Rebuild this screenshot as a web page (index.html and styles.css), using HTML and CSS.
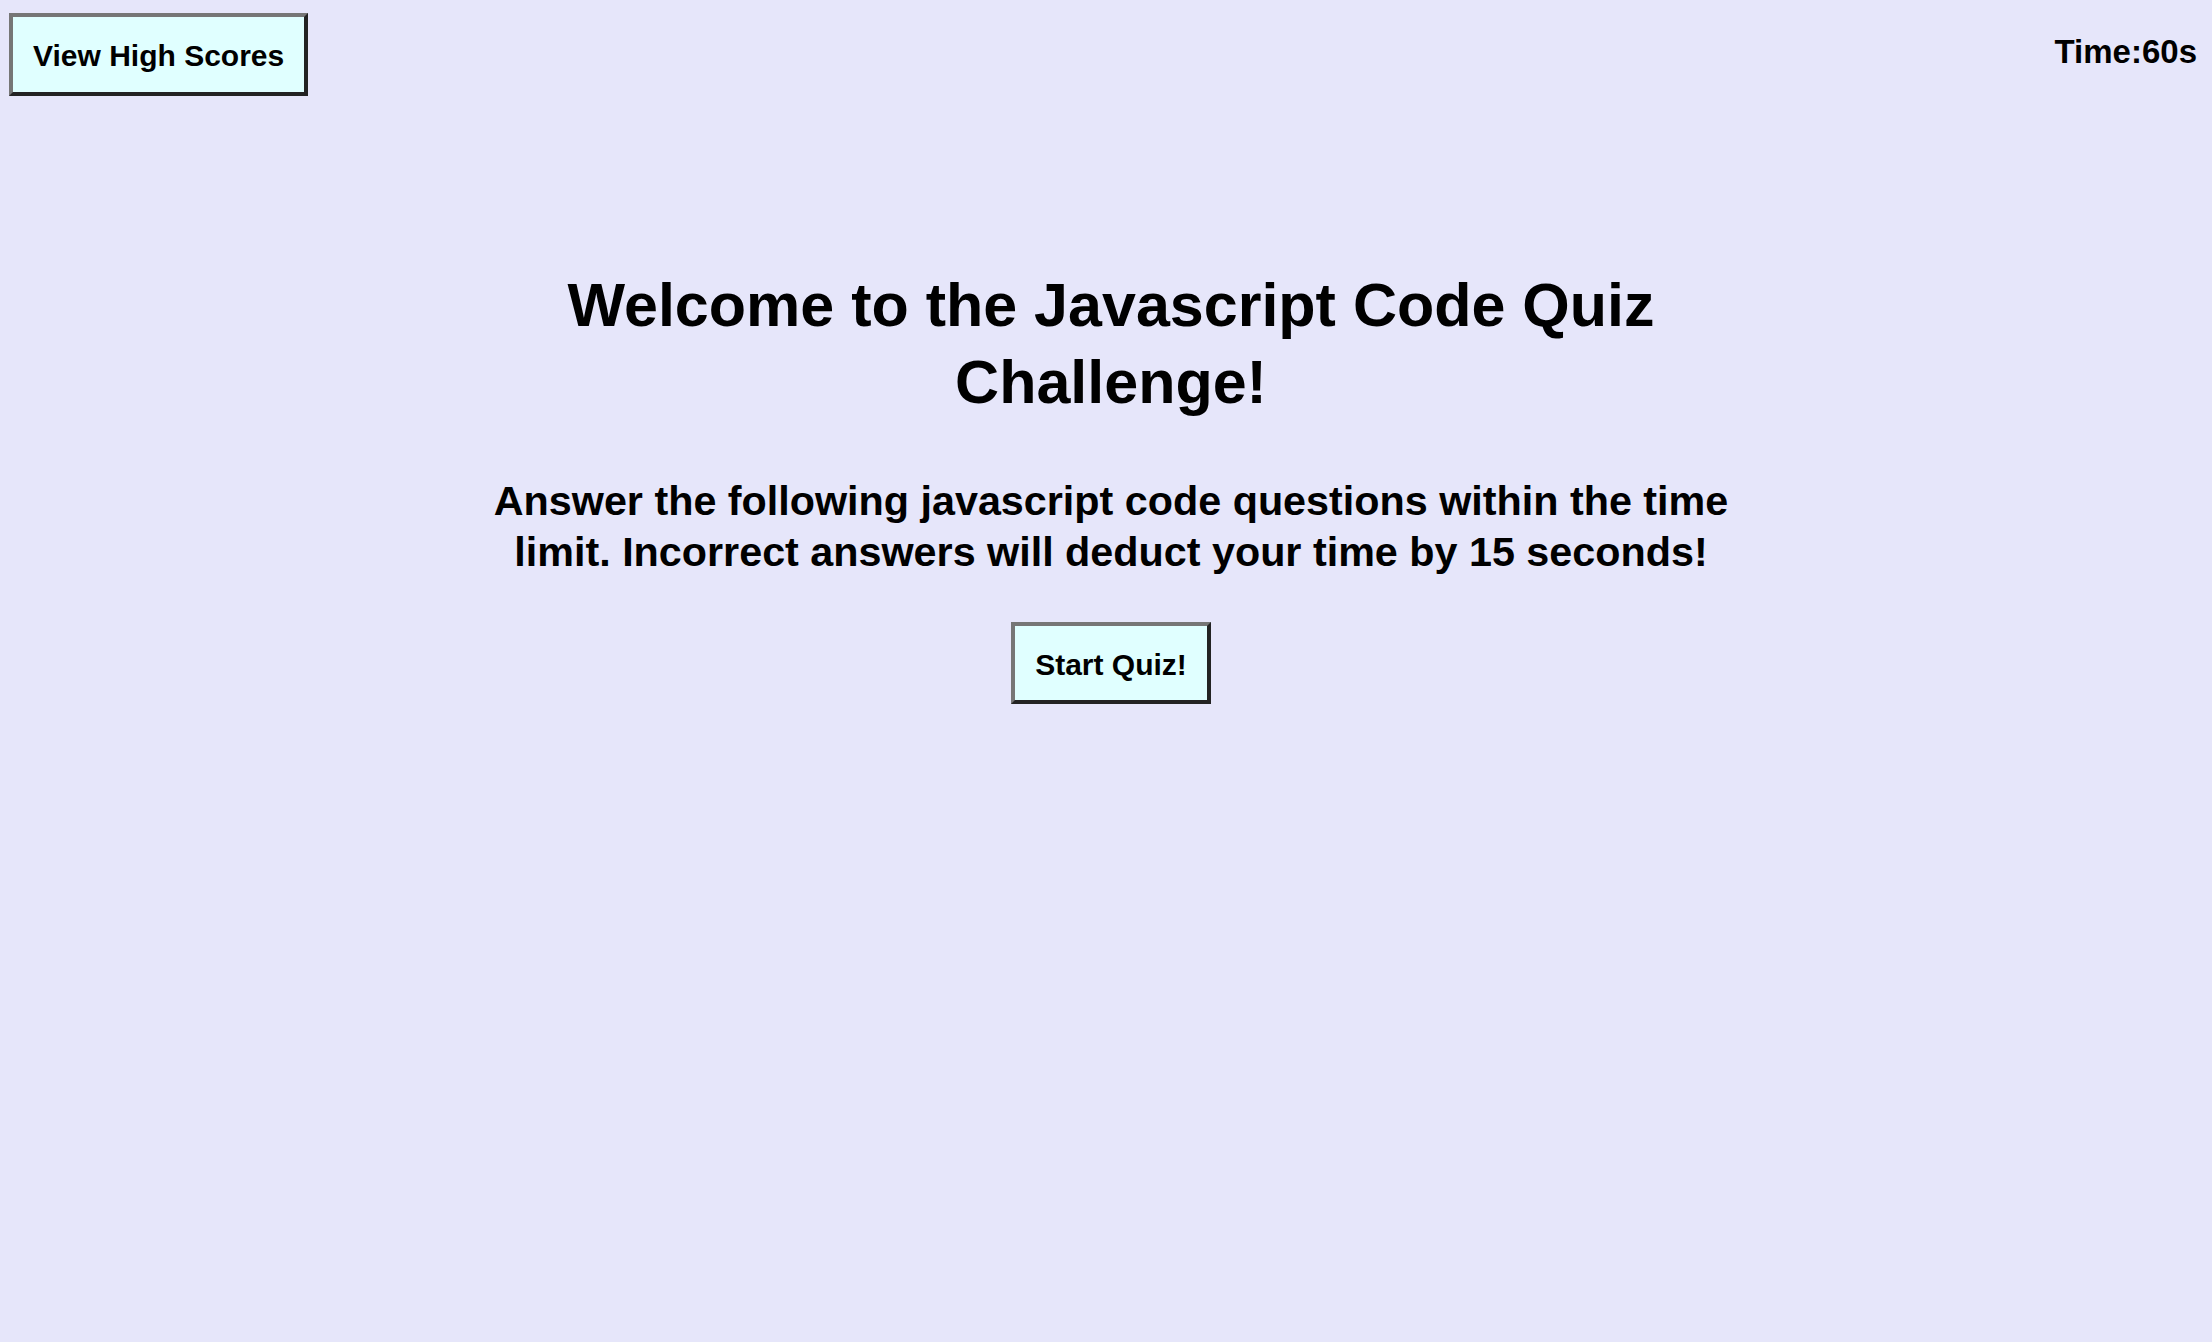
FILE: index.html
```html
<!DOCTYPE html>
<html lang="en">
<head>
<meta charset="utf-8">
<title>Javascript Code Quiz</title>
<link rel="stylesheet" href="styles.css">
</head>
<body>
<header class="top-bar">
  <button class="btn btn-scores">View High Scores</button>
  <div class="timer">Time:60s</div>
</header>
<main class="main">
  <section class="intro">
    <h1 class="title">Welcome to the Javascript Code Quiz Challenge!</h1>
    <p class="lead">Answer the following javascript code questions within the time limit. Incorrect answers will deduct your time by 15 seconds!</p>
    <button class="btn btn-start">Start Quiz!</button>
  </section>
</main>
</body>
</html>
```
FILE: styles.css
```css
html, body {
  margin: 0;
  padding: 0;
}
body {
  background: #e6e6fa;
  color: #000;
  font-family: "Liberation Sans", Arial, sans-serif;
  font-weight: 700;
  min-height: 1342px;
}
.top-bar {
  display: flex;
  justify-content: space-between;
  align-items: flex-start;
  padding: 13px 15px 0 9px;
}
.btn {
  font-family: "Liberation Sans", Arial, sans-serif;
  font-weight: 700;
  font-size: 30px;
  line-height: 35px;
  color: #000;
  background: #e0ffff;
  border-width: 4px;
  border-style: solid;
  border-color: #767676 #232323 #232323 #767676;
  margin: 0;
  cursor: pointer;
}
.btn-scores {
  padding: 21px 20px 19px;
}
.btn-start {
  padding: 21px 20px 18px;
}
.timer {
  font-size: 33px;
  line-height: 38px;
  margin-top: 20px;
}
.main {
  padding-left: 10px;
  margin-top: 171px;
}
.intro {
  width: 1280px;
  margin: 0 auto;
  display: flex;
  flex-direction: column;
  align-items: center;
  text-align: center;
}
.title {
  font-size: 61px;
  line-height: 77px;
  margin: 0;
  font-weight: 700;
}
.lead {
  font-size: 41.3px;
  line-height: 51px;
  margin: 55px 0 44px;
}
```
